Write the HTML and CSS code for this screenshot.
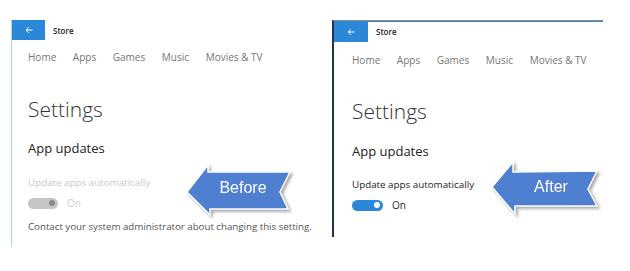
FILE: index.html
```html
<!DOCTYPE html>
<html>
<head>
<meta charset="utf-8">
<link rel="stylesheet" href="styles.css">
</head>
<body>
  <div class="panel before">
    <div class="titlebar">
      <div class="back"><svg width="8" height="8" viewBox="0 0 8 8"><path d="M7.5 4H1M4 1L1 4L4 7" fill="none" stroke="#fff" stroke-width="1"/></svg></div>
      <div class="title">Store</div>
    </div>
    <div class="content">
      <div class="nav"><span>Home</span><span>Apps</span><span>Games</span><span>Music</span><span>Movies &amp; TV</span></div>
      <div class="heading">Settings</div>
      <div class="section">App updates</div>
      <div class="label disabled">Update apps automatically</div>
      <div class="toggle-row">
        <div class="toggle off"><span class="knob"></span></div>
        <span class="state disabled">On</span>
      </div>
      <div class="note">Contact your system administrator about changing this setting.</div>
    </div>
    <svg class="callout callout-before" width="112" height="60" viewBox="0 0 112 60">
      <polygon points="3,30 24,3 24,10 106,10 96,30 104,47 26,47 26,53" />
      <text x="59" y="31">Before</text>
    </svg>
  </div>
  <div class="panel after">
    <div class="titlebar">
      <div class="back"><svg width="8" height="8" viewBox="0 0 8 8"><path d="M7.5 4H1M4 1L1 4L4 7" fill="none" stroke="#fff" stroke-width="1"/></svg></div>
      <div class="title">Store</div>
    </div>
    <div class="content">
      <div class="nav"><span>Home</span><span>Apps</span><span>Games</span><span>Music</span><span>Movies &amp; TV</span></div>
      <div class="heading">Settings</div>
      <div class="section">App updates</div>
      <div class="label">Update apps automatically</div>
      <div class="toggle-row">
        <div class="toggle on"><span class="knob"></span></div>
        <span class="state">On</span>
      </div>
    </div>
    <svg class="callout callout-after" width="116" height="60" viewBox="0 0 116 60">
      <polygon points="4,28 25,3 25,13 109,12 100,30 109,47 27,47 27,55" />
      <text x="63" y="33">After</text>
    </svg>
  </div>
</body>
</html>
```
FILE: styles.css
```css
html, body {
  margin: 0;
  background: #fff;
}
body {
  display: flex;
  align-items: flex-start;
  padding: 20px 0 0 11px;
  font-family: "Open Sans", "Noto Sans", sans-serif;
}
.panel {
  position: relative;
  box-sizing: border-box;
}
.before {
  width: 321px;
  height: 227px;
  border-left: 1px solid #a9d1ee;
}
.after {
  width: 271px;
  height: 217px;
  border-left: 2px solid #1f3550;
  border-top: 1px solid #8f8f8f;
  box-shadow: inset 0 1px 0 #3b82c4;
}
.titlebar {
  display: flex;
  align-items: center;
  height: 20px;
}
.after .titlebar {
  height: 21px;
}
.back {
  width: 33px;
  height: 100%;
  background: #2b88d8;
  display: flex;
  align-items: center;
  justify-content: center;
}
.after .back {
  width: 34px;
}
.title {
  margin-left: 8px;
  font-size: 8px;
  font-weight: 600;
  color: #222;
}
.content {
  padding-left: 16px;
}
.after .content {
  padding-left: 18px;
}
.nav {
  display: flex;
  gap: 16.6px;
  margin-top: 10px;
  font-size: 10px;
  line-height: 14px;
  color: #767676;
}
.after .nav { margin-top: 11px; }
.heading {
  margin-top: 31px;
  font-size: 21px;
  font-weight: 300;
  line-height: 28px;
  color: #333;
}
.after .heading { margin-top: 30px; }
.section {
  margin-top: 17px;
  font-size: 13px;
  line-height: 16px;
  color: #222;
}
.after .section { margin-top: 18px; }
.label {
  margin-top: 20px;
  font-size: 9.8px;
  line-height: 14px;
  color: #222;
}
.after .label { margin-top: 19px; }
.disabled {
  color: #cacaca;
}
.toggle-row {
  display: flex;
  align-items: center;
  margin-top: 6px;
  height: 14px;
}
.toggle {
  width: 30px;
  height: 11px;
  border-radius: 6px;
  display: flex;
  align-items: center;
  justify-content: flex-end;
  padding-right: 3px;
  box-sizing: border-box;
}
.toggle.off { background: #c6c6c6; }
.toggle.on { background: #2b88d8; width: 31px; }
.knob {
  width: 6px;
  height: 6px;
  border-radius: 50%;
}
.toggle.off .knob { background: #8a8a8a; }
.toggle.on .knob { background: #fff; }
.state {
  margin-left: 9px;
  font-size: 10px;
  color: #222;
}
.state.disabled { color: #d0d0d0; }
.note {
  margin-top: 10px;
  font-size: 9.8px;
  letter-spacing: -0.05px;
  line-height: 14px;
  color: #555;
}
.callout {
  position: absolute;
  overflow: visible;
  filter: drop-shadow(2px 2px 1.5px rgba(0,0,0,0.35));
}
.callout polygon {
  fill: #4e7fd0;
  stroke: #fff;
  stroke-width: 1.5;
  stroke-linejoin: miter;
}
.callout text {
  fill: #fff;
  font-family: "Liberation Sans", Arial, sans-serif;
  font-size: 16px;
  text-anchor: middle;
}
.callout-before {
  left: 172px;
  top: 142px;
}
.callout-after {
  left: 154px;
  top: 138px;
}
```
